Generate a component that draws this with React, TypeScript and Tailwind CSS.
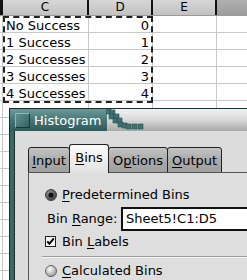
import React from "react";

const data: [string, string][] = [
  ["No Success", "0"],
  ["1 Success", "1"],
  ["2 Successes", "2"],
  ["3 Successes", "3"],
  ["4 Successes", "4"],
];

function SheetRow({ c, d }: { c: string; d: string }) {
  return (
    <div className="flex h-[17px] shrink-0 border-b border-[#c8c8c8]">
      <div className="w-[3px] shrink-0 border-r border-[#c8c8c8]" />
      <div className="w-[86px] shrink-0 border-r border-[#c8c8c8] pl-[3px] pt-[3px] leading-[14px] whitespace-nowrap">
        {c}
      </div>
      <div className="w-[64px] shrink-0 border-r border-[#c8c8c8] pr-[3px] pt-[3px] text-right leading-[14px]">
        {d}
      </div>
      <div className="w-[64px] shrink-0 border-r border-[#c8c8c8]" />
      <div className="flex-1" />
    </div>
  );
}

function U({ children }: { children: React.ReactNode }) {
  return <span className="underline underline-offset-[2px] decoration-[1px]">{children}</span>;
}

function RadioOn() {
  return (
    <svg width="12" height="12" viewBox="0 0 12 12" className="shrink-0">
      <defs>
        <radialGradient id="ro" cx="40%" cy="35%" r="70%">
          <stop offset="0" stopColor="#9a9a9a" />
          <stop offset="1" stopColor="#3a3a3a" />
        </radialGradient>
      </defs>
      <circle cx="6" cy="6" r="5.5" fill="url(#ro)" stroke="#444" strokeWidth="1" />
      <circle cx="6" cy="6" r="2.6" fill="#111" />
    </svg>
  );
}

function RadioOff() {
  return (
    <svg width="12" height="12" viewBox="0 0 12 12" className="shrink-0">
      <defs>
        <radialGradient id="rf" cx="40%" cy="35%" r="75%">
          <stop offset="0" stopColor="#ffffff" />
          <stop offset="1" stopColor="#8a8a8a" />
        </radialGradient>
      </defs>
      <circle cx="6" cy="6" r="5.5" fill="url(#rf)" stroke="#666" strokeWidth="1" />
    </svg>
  );
}

function Check() {
  return (
    <svg width="11" height="11" viewBox="0 0 11 11" className="shrink-0">
      <rect x="0.5" y="0.5" width="10" height="10" fill="#f4f4f4" stroke="#222" />
      <path d="M2.3 5.3 L4.4 7.8 L8.8 2.4" fill="none" stroke="#000" strokeWidth="2" />
    </svg>
  );
}

function Stairs() {
  const sq: [number, number][] = [
    [0, 0], [4, 1], [3, 5], [8, 5], [7, 9], [11, 9], [12, 13], [16, 14], [20, 15], [26, 15], [32, 15],
  ];
  return (
    <svg width="44" height="22" viewBox="0 0 44 22" className="absolute left-[96px] top-0">
      {sq.map(([x, y], i) => (
        <rect key={i} x={x} y={y} width="5" height="5" fill="#3f7272" stroke="#2a5050" strokeWidth="0.6" />
      ))}
    </svg>
  );
}

export default function App() {
  const extra = Array.from({ length: 12 }, () => ["", ""] as [string, string]);
  return (
    <div className="relative h-[280px] w-[247px] overflow-hidden bg-white font-['DejaVu_Sans',sans-serif] text-[13px] text-black">
      {/* Header */}
      <div className="flex h-[16px] border-b border-[#9a9a9a] text-[12px] leading-[15px]">
        <div className="w-[3px] shrink-0 bg-[#111]" />
        <div className="w-[86px] shrink-0 border-r-2 border-[#111] bg-gradient-to-b from-[#d6d6d6] to-[#c2c2c2] text-center">C</div>
        <div className="w-[64px] shrink-0 border-r-2 border-[#111] bg-gradient-to-b from-[#d6d6d6] to-[#c2c2c2] text-center">D</div>
        <div className="w-[64px] shrink-0 border-r-2 border-[#111] bg-gradient-to-b from-[#d6d6d6] to-[#c2c2c2] text-center">E</div>
        <div className="flex-1 bg-gradient-to-b from-[#b0b0b0] to-[#9c9c9c]" />
      </div>
      {data.map(([c, d], i) => (
        <SheetRow key={i} c={c} d={d} />
      ))}
      {extra.map(([c, d], i) => (
        <SheetRow key={"e" + i} c={c} d={d} />
      ))}

      {/* selection marquee */}
      <div className="absolute left-[3px] top-[16px] h-[87px] w-[150px] border-2 border-dashed border-[#222]" />

      {/* Dialog */}
      <div className="absolute left-[9px] top-[108px] flex h-[200px] w-[270px] flex-col border border-[#1c2f2f] bg-[#3b6767]">
        {/* title bar */}
        <div className="relative flex h-[22px] shrink-0 bg-gradient-to-b from-[#f2f2f2] via-[#d8d8d8] to-[#a9a9a9]">
          <div className="flex w-[97px] items-center bg-gradient-to-b from-[#6a9a9a] via-[#467777] to-[#2f5a5a] pl-[5px]">
            <div className="h-[15px] w-[15px] border border-t-[#8fb8b8] border-l-[#8fb8b8] border-b-[#1c3535] border-r-[#1c3535] bg-gradient-to-br from-[#5f9292] to-[#356262]" />
            <span className="ml-[4px] text-[13px] leading-[15px] text-white">Histogram</span>
          </div>
          <Stairs />
        </div>
        {/* body */}
        <div className="ml-[4px] flex flex-1 flex-col border-l border-[#1c2f2f] bg-[#dcdcdc] pl-[13px] pt-[14px]">
          {/* tabs */}
          <div className="flex h-[28px] items-end text-[13px]">
            <div className="flex h-[26px] w-[42px] items-center justify-center rounded-t-[3px] border border-[#222] bg-gradient-to-b from-[#c4c4c4] via-[#ababab] to-[#a0a0a0] pt-[2px]">
              <span><U>I</U>nput</span>
            </div>
            <div className="-ml-px z-10 flex h-[29px] w-[40px] items-center justify-center rounded-t-[3px] border border-b-0 border-[#222] bg-gradient-to-b from-[#fafafa] to-[#e2e2e2] pb-[2px]">
              <span><U>B</U>ins</span>
            </div>
            <div className="-ml-px flex h-[26px] w-[60px] items-center justify-center rounded-t-[3px] border border-[#222] bg-gradient-to-b from-[#c4c4c4] via-[#ababab] to-[#a0a0a0] pt-[1px]">
              <span>O<U>p</U>tions</span>
            </div>
            <div className="-ml-px flex h-[26px] w-[55px] items-center justify-center rounded-t-[3px] border border-[#222] bg-gradient-to-b from-[#c4c4c4] via-[#ababab] to-[#a0a0a0] pt-[1px]">
              <span><U>O</U>utput</span>
            </div>
          </div>
          {/* panel */}
          <div className="-mt-px flex flex-1 flex-col border-l border-t border-[#555] bg-[#dedede] pl-[16px]">
            <div className="mt-[15px] flex h-[14px] items-center gap-[5px]">
              <RadioOn />
              <span className="leading-[14px]"><U>P</U>redetermined Bins</span>
            </div>
            <div className="mt-[5px] flex h-[24px] items-center">
              <span className="ml-[2px] w-[74px] shrink-0 leading-[14px]">Bin <U>R</U>ange:</span>
              <div className="flex h-[24px] flex-1 items-center border-2 border-[#111] border-r-0 bg-white pl-[3px] leading-[14px]">
                Sheet5!C1:D5
              </div>
            </div>
            <div className="mt-[5px] flex h-[11px] items-center gap-[6px]">
              <Check />
              <span className="leading-[14px]">Bin <U>L</U>abels</span>
            </div>
            <div className="-ml-[3px] mt-[9px] h-[2px] border-t border-b border-t-[#9c9c9c] border-b-[#f6f6f6]" />
            <div className="mt-[7px] flex h-[12px] items-center gap-[5px]">
              <RadioOff />
              <span className="leading-[14px]"><U>C</U>alculated Bins</span>
            </div>
          </div>
        </div>
      </div>
    </div>
  );
}
